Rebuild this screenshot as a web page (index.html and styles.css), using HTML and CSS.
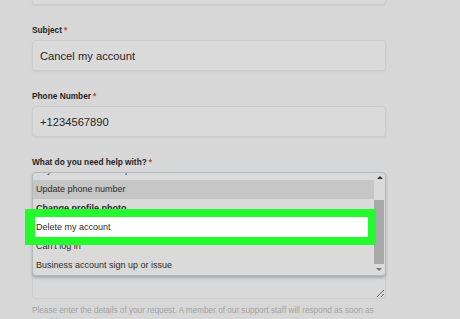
FILE: index.html
```html
<!DOCTYPE html>
<html lang="en">
<head>
    <meta charset="UTF-8">
    <meta name="viewport" content="width=device-width, initial-scale=1.0">
    <title>Contact Support</title>
    <link rel="stylesheet" href="styles.css">
</head>
<body>
    <form class="form">
        <div class="field">
            <input class="text-input" type="email" name="email">
        </div>
        <div class="field">
            <label class="label">Subject<span class="req">*</span></label>
            <input class="text-input" type="text" name="subject" value="Cancel my account">
        </div>
        <div class="field">
            <label class="label">Phone Number<span class="req">*</span></label>
            <input class="text-input" type="text" name="phone" value="+1234567890">
        </div>
        <div class="field select-field">
            <label class="label">What do you need help with?<span class="req">*</span></label>
            <textarea class="details" name="details"></textarea>
            <div class="dropdown">
                <div class="options">
                    <div class="opt cut"><span>Payment info not accepted</span></div>
                    <div class="opt active">Update phone number</div>
                    <div class="opt group">Change profile photo</div>
                    <div class="opt picked">Delete my account</div>
                    <div class="opt">Can't log in</div>
                    <div class="opt">Business account sign up or issue</div>
                </div>
                <div class="scrollbar">
                    <div class="sb-up"><span class="arrow-up"></span></div>
                    <div class="sb-thumb"></div>
                    <div class="sb-down"><span class="arrow-down"></span></div>
                </div>
            </div>
        </div>
        <p class="hint">Please enter the details of your request. A member of our support staff will respond as soon as possible.</p>
    </form>
</body>
</html>
```

FILE: styles.css
```css
body {
    margin: 0;
    background: #d7d7d7;
    font-family: "Liberation Sans", Arial, sans-serif;
    overflow: hidden;
}
.form {
    width: 354px;
    margin: -26px 0 0 32px;
}
.field {
    margin-bottom: 19px;
}
.label {
    display: block;
    font-size: 8.3px;
    font-weight: bold;
    line-height: 12px;
    margin-bottom: 4px;
    color: #1f1f1f;
}
.req {
    color: #c23b3b;
    margin-left: 2px;
}
.text-input {
    display: block;
    box-sizing: border-box;
    width: 100%;
    height: 31px;
    border: 1px solid #cdcdcd;
    border-radius: 4px;
    background: #dadada;
    padding: 0 7px;
    font-family: "Liberation Sans", Arial, sans-serif;
    font-size: 11.2px;
    color: #262626;
    box-shadow: 0 1px 2px rgba(0, 0, 0, 0.05);
}
.select-field {
    position: relative;
    margin-bottom: 0;
}
.details {
    display: block;
    box-sizing: border-box;
    width: 100%;
    height: 127px;
    border: 1px solid #cdcdcd;
    border-radius: 4px;
    background: #d9d9d9;
    resize: vertical;
}
.dropdown {
    position: absolute;
    top: 16px;
    left: 0;
    width: 354px;
    height: 104px;
    box-sizing: border-box;
    border: 1px solid #b4b9bd;
    border-radius: 4px;
    background: #dadada;
    display: flex;
    box-shadow: 0 2px 3px rgba(0, 0, 0, 0.22);
}
.options {
    flex: 1;
}
.opt {
    height: 19px;
    line-height: 19px;
    padding-left: 3px;
    font-size: 9px;
    color: #2b2b2b;
    white-space: nowrap;
}
.opt.cut {
    height: 7px;
    overflow: hidden;
}
.opt.cut span {
    display: block;
    height: 19px;
    margin-top: -12px;
}
.opt.active {
    background: #c6c6c6;
}
.opt.group {
    font-weight: bold;
}
.opt.picked {
    position: relative;
    z-index: 1;
}
.opt.picked::before {
    content: "";
    position: absolute;
    left: -8px;
    right: -2px;
    top: -9px;
    bottom: -8px;
    border-style: solid;
    border-color: #23fb2e;
    border-width: 8px 8px 8px 10px;
    background: #fff;
    z-index: -1;
}
.scrollbar {
    width: 11px;
    display: flex;
    flex-direction: column;
}
.sb-up {
    height: 27px;
    display: flex;
    justify-content: center;
    padding-top: 3px;
    box-sizing: border-box;
}
.sb-thumb {
    width: 10px;
    height: 64px;
    background: #a9a9a9;
}
.sb-down {
    flex: 1;
    display: flex;
    justify-content: center;
    padding-top: 4px;
    padding-right: 1px;
}
.arrow-up {
    width: 0;
    height: 0;
    border-left: 3px solid transparent;
    border-right: 3px solid transparent;
    border-bottom: 3px solid #333;
}
.arrow-down {
    width: 0;
    height: 0;
    border-left: 3px solid transparent;
    border-right: 3px solid transparent;
    border-top: 3px solid #777;
}
.hint {
    margin: 6px 0 0;
    font-size: 8.2px;
    line-height: 12px;
    color: #a3a3a3;
}
```
